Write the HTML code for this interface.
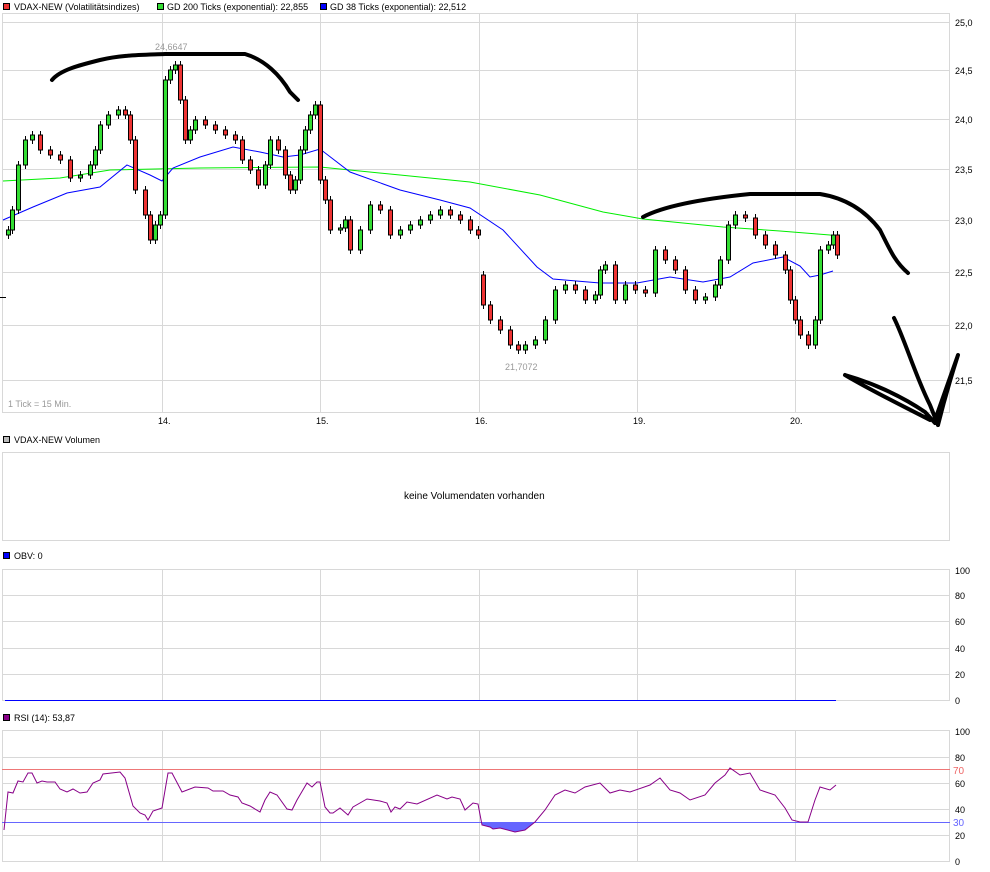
<!DOCTYPE html>
<html><head><meta charset="utf-8"><style>
html,body{margin:0;padding:0;background:#fff;width:990px;height:872px;overflow:hidden}
svg{display:block}
text{font-family:"Liberation Sans",sans-serif;font-size:9px;fill:#000}
</style></head><body>
<svg width="990" height="872" xmlns="http://www.w3.org/2000/svg">
<rect x="3.5" y="3.5" width="6" height="6" fill="#e33" stroke="#000"/>
<text x="14" y="10">VDAX-NEW (Volatilitätsindizes)</text>
<rect x="157.5" y="3.5" width="6" height="6" fill="#3d3" stroke="#000"/>
<text x="167" y="10">GD 200 Ticks (exponential): 22,855</text>
<rect x="320.5" y="3.5" width="6" height="6" fill="#00f" stroke="#000"/>
<text x="330" y="10">GD 38 Ticks (exponential): 22,512</text>
<g stroke="#d8d8d8" stroke-width="1" fill="none">
<rect x="2.5" y="13.5" width="947" height="399"/>
<path d="M2 22.5H950M2 70.5H950M2 119.5H950M2 169.5H950M2 220.5H950M2 272.5H950M2 325.5H950M2 380.5H950"/>
<path d="M162.5 13V413M320.5 13V413M479.5 13V413M637.5 13V413M795.5 13V413"/>
<rect x="2.5" y="452.5" width="947" height="88"/>
<rect x="2.5" y="569.5" width="947" height="131"/>
<path d="M2 595.5H950M2 621.5H950M2 648.5H950M2 674.5H950"/>
<path d="M162.5 569V701M320.5 569V701M479.5 569V701M637.5 569V701M795.5 569V701"/>
<rect x="2.5" y="730.5" width="947" height="131"/>
<path d="M2 757.5H950M2 783.5H950M2 809.5H950M2 835.5H950"/>
<path d="M162.5 730V862M320.5 730V862M479.5 730V862M637.5 730V862M795.5 730V862"/>
</g>
<path d="M0 297.5H6" stroke="#000"/>
<g>
<text x="955" y="26">25,0</text><text x="955" y="74">24,5</text><text x="955" y="123">24,0</text>
<text x="955" y="173">23,5</text><text x="955" y="224">23,0</text><text x="955" y="276">22,5</text>
<text x="955" y="329">22,0</text><text x="955" y="384">21,5</text>
<text x="158" y="424">14.</text><text x="316" y="424">15.</text><text x="475" y="424">16.</text>
<text x="633" y="424">19.</text><text x="790" y="424">20.</text>
<text x="8" y="407" style="fill:#999">1 Tick = 15 Min.</text>
<text x="155" y="50" style="fill:#999">24,6647</text>
<text x="505" y="370" style="fill:#999">21,7072</text>
</g>
<rect x="3.5" y="436.5" width="6" height="6" fill="#bbb" stroke="#000"/>
<text x="14" y="443">VDAX-NEW Volumen</text>
<text x="404" y="499" style="font-size:10px">keine Volumendaten vorhanden</text>
<rect x="3.5" y="552.5" width="6" height="6" fill="#00f" stroke="#000"/>
<text x="14" y="559">OBV: 0</text>
<g>
<text x="955" y="574">100</text><text x="955" y="599">80</text><text x="955" y="625">60</text>
<text x="955" y="652">40</text><text x="955" y="678">20</text><text x="955" y="704">0</text>
</g>
<path d="M5 700.5H836" stroke="#00f"/>
<rect x="3.5" y="714.5" width="6" height="6" fill="#808" stroke="#000"/>
<text x="14" y="721">RSI (14): 53,87</text>
<g>
<text x="955" y="735">100</text><text x="955" y="761">80</text><text x="955" y="787">60</text>
<text x="955" y="813">40</text><text x="955" y="839">20</text><text x="955" y="865">0</text>
<text x="953" y="774" style="fill:#e66;font-size:10px">70</text>
<text x="953" y="826" style="fill:#66f;font-size:10px">30</text>
</g>
<path d="M2 769.5H950" stroke="#e77"/>
<path d="M2 822.5H950" stroke="#66f"/>
<path d="M482 822 L482 825 490 827 493 829 500 828 515 832 525 830 535 822Z" fill="#66f"/>
<polyline fill="none" stroke="#808" stroke-width="1" points="4,830 8,792 13,793 18,781 23,782 28,773 32,773 37,783 42,781 47,782 55,782 60,789 67,792 73,789 80,793 87,792 93,783 100,780 103,774 120,772 125,778 133,806 140,813 145,815 148,820 153,811 162,808 168,773 172,773 182,792 195,787 208,788 213,791 223,791 230,795 238,797 242,803 250,806 260,812 265,800 270,792 277,795 287,809 292,810 297,800 307,783 312,787 317,782 320,782 325,807 330,813 333,813 340,808 348,815 353,807 367,799 380,801 387,803 391,812 395,807 400,809 407,802 417,804 437,795 447,799 452,797 460,799 465,810 473,803 478,804 482,825 490,827 493,829 500,828 515,832 525,830 535,822 545,810 555,795 565,790 575,793 585,787 600,783 610,793 620,790 630,792 650,785 660,778 670,790 680,793 690,800 705,795 715,783 725,775 730,768 740,775 750,773 760,790 775,795 785,808 792,820 800,822 808,822 815,800 820,787 830,790 836,785"/>
<polyline fill="none" stroke="#0e0" points="3,181 60,178 110,170 200,168 320,167 400,175 470,182 540,195 603,212 643,219 723,227 780,231 830,235 836,236"/>
<polyline fill="none" stroke="#00f" points="3,220 33,207 67,193 100,187 127,165 150,175 162,181 173,168 200,157 233,147 260,152 283,157 300,155 320,149 350,172 400,190 440,200 470,208 503,230 537,267 553,279 600,283 637,283 670,277 703,282 730,277 753,263 783,257 800,266 810,277 820,275 833,271"/>
<g transform="translate(0.5,0)" shape-rendering="crispEdges">
<path stroke="#000" fill="none" d="M8 226V239M12 206V234M18 161V214M25 136V169M32 131V144M40 131V154M50 146V159M60 151V164M70 156V182M80 171V182M90 161V179M95 146V169M100 121V154M108 111V129M118 106V119M125 106V119M130 111V144M135 136V194M145 186V219M150 211V244M155 221V244M160 211V229M165 76V219M170 66V84M175 61V74M180 61V104M185 96V144M190 126V144M195 116V134M205 116V129M215 121V134M225 126V139M235 131V144M242 136V164M250 156V174M258 166V189M265 161V189M270 136V169M278 136V154M285 146V179M290 171V194M295 176V194M300 146V184M305 126V154M310 111V134M315 101V119M320 101V184M325 176V204M330 196V234M340 224V234M345 216V232M350 216V254M360 226V254M370 201V234M380 201V214M390 206V239M400 226V239M410 221V234M420 216V229M430 211V224M440 206V219M450 206V219M460 211V224M470 216V234M478 226V239M483 271V309M490 301V324M500 316V334M510 326V349M518 341V354M525 341V354M535 336V349M545 316V344M555 286V324M565 281V294M575 281V294M585 286V304M595 291V304M600 266V299M605 261V274M615 261V304M625 281V304M635 281V294M645 286V297M655 246V297M665 246V264M675 256V274M685 266V294M695 286V304M705 293V304M715 281V301M720 256V289M728 221V264M735 211V229M745 211V222M755 214V239M765 231V249M775 241V259M785 251V274M790 266V304M795 296V324M800 316V339M808 331V349M815 316V349M820 246V324M828 241V254M833 231V249M837 231V259"/>
<path stroke="#000" fill="#3d3" d="M6 230h4v5h-4zM10 210h4v20h-4zM16 165h4v45h-4zM23 140h4v25h-4zM30 135h4v5h-4zM78 175h4v3h-4zM88 165h4v10h-4zM93 150h4v15h-4zM98 125h4v25h-4zM106 115h4v10h-4zM116 110h4v5h-4zM153 225h4v15h-4zM158 215h4v10h-4zM163 80h4v135h-4zM168 70h4v10h-4zM173 65h4v5h-4zM188 130h4v10h-4zM193 120h4v10h-4zM263 165h4v20h-4zM268 140h4v25h-4zM293 180h4v10h-4zM298 150h4v30h-4zM303 130h4v20h-4zM308 115h4v15h-4zM313 105h4v10h-4zM338 228h4v2h-4zM343 220h4v8h-4zM358 230h4v20h-4zM368 205h4v25h-4zM398 230h4v5h-4zM408 225h4v5h-4zM418 220h4v5h-4zM428 215h4v5h-4zM438 210h4v5h-4zM523 345h4v5h-4zM533 340h4v5h-4zM543 320h4v20h-4zM553 290h4v30h-4zM563 285h4v5h-4zM593 295h4v5h-4zM598 270h4v25h-4zM603 265h4v5h-4zM623 285h4v15h-4zM653 250h4v43h-4zM703 297h4v3h-4zM713 285h4v12h-4zM718 260h4v25h-4zM726 225h4v35h-4zM733 215h4v10h-4zM813 320h4v25h-4zM818 250h4v70h-4zM826 245h4v5h-4zM831 235h4v10h-4z"/>
<path stroke="#000" fill="#e33" d="M38 135h4v15h-4zM48 150h4v5h-4zM58 155h4v5h-4zM68 160h4v18h-4zM123 110h4v5h-4zM128 115h4v25h-4zM133 140h4v50h-4zM143 190h4v25h-4zM148 215h4v25h-4zM178 65h4v35h-4zM183 100h4v40h-4zM203 120h4v5h-4zM213 125h4v5h-4zM223 130h4v5h-4zM233 135h4v5h-4zM240 140h4v20h-4zM248 160h4v10h-4zM256 170h4v15h-4zM276 140h4v10h-4zM283 150h4v25h-4zM288 175h4v15h-4zM318 105h4v75h-4zM323 180h4v20h-4zM328 200h4v30h-4zM348 220h4v30h-4zM378 205h4v5h-4zM388 210h4v25h-4zM448 210h4v5h-4zM458 215h4v5h-4zM468 220h4v10h-4zM476 230h4v5h-4zM481 275h4v30h-4zM488 305h4v15h-4zM498 320h4v10h-4zM508 330h4v15h-4zM516 345h4v5h-4zM573 285h4v5h-4zM583 290h4v10h-4zM613 265h4v35h-4zM633 285h4v5h-4zM643 290h4v3h-4zM663 250h4v10h-4zM673 260h4v10h-4zM683 270h4v20h-4zM693 290h4v10h-4zM743 215h4v3h-4zM753 218h4v17h-4zM763 235h4v10h-4zM773 245h4v10h-4zM783 255h4v15h-4zM788 270h4v30h-4zM793 300h4v20h-4zM798 320h4v15h-4zM806 335h4v10h-4zM835 235h4v20h-4z"/>
</g>
<g fill="none" stroke="#000" stroke-width="4" stroke-linecap="round" stroke-linejoin="round">
<path d="M52 80 C60 70 80 65 100 60 S140 55 165 54 L245 54 C265 60 280 75 290 92 L298 100"/>
<path d="M643 217 C660 208 690 200 750 194 L820 194 C845 198 865 210 880 230 C890 250 895 262 908 273"/>
<path d="M894 318 C905 340 915 375 930 405 L938 425 M938 425 C943 405 950 380 958 355 M958 355 L935 420 M845 375 C870 382 900 395 925 412 L935 423 M845 375 C870 390 895 402 930 420"/>
</g>
</svg>
</body></html>
